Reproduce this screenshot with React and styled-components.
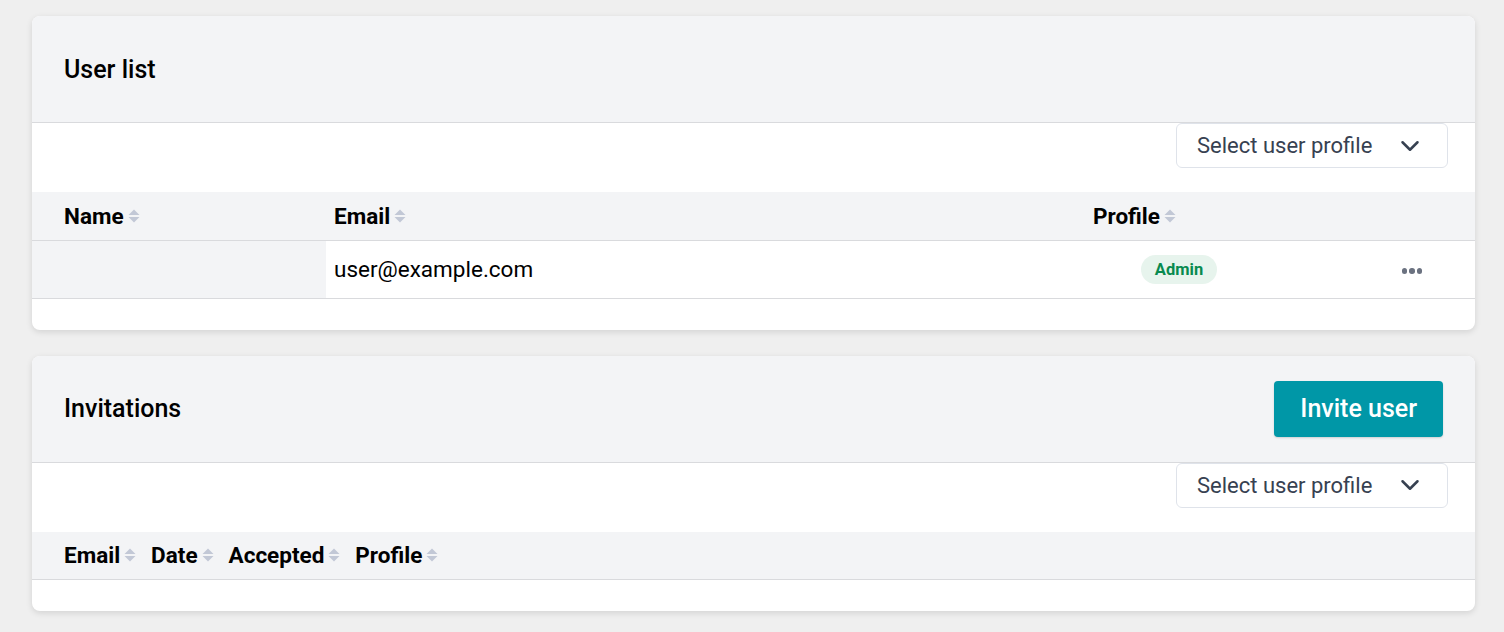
import React from "react";
import styled, { createGlobalStyle } from "styled-components";
import { ChevronDown } from "lucide-react";

const Global = createGlobalStyle`
  html, body { margin: 0; padding: 0; background: #efefef; }
  body { font-family: Roboto, "Noto Sans", Arial, sans-serif; color: #000; }
`;

const Page = styled.div`
  display: flex;
  flex-direction: column;
  gap: 26px;
  padding: 16px 29px 20px 32px;
`;

const Card = styled.section`
  background: #fff;
  border-radius: 8px;
  box-shadow: 0 2px 6px rgba(0, 0, 0, 0.12);
  overflow: hidden;
  padding-bottom: 31px;
`;

const CardHeader = styled.header`
  display: flex;
  align-items: center;
  justify-content: space-between;
  height: 106px;
  padding: 0 32px;
  background: #f3f4f6;
  border-bottom: 1px solid #d9dadd;
`;

const Title = styled.h2`
  margin: 0;
  font-size: 25px;
  font-weight: 500;
  color: #000;
`;

const PrimaryButton = styled.button`
  height: 56px;
  padding: 0 26px;
  border: none;
  border-radius: 4px;
  background: #0097a7;
  color: #fff;
  font-family: inherit;
  font-size: 25px;
  font-weight: 500;
  box-shadow: 0 1px 2px rgba(0, 0, 0, 0.15);
`;

const FilterRow = styled.div`
  display: flex;
  justify-content: flex-end;
  padding: 0 27px 24px 0;
`;

const SelectBox = styled.div`
  display: flex;
  align-items: center;
  justify-content: space-between;
  width: 272px;
  height: 45px;
  box-sizing: border-box;
  padding: 0 22px 0 20px;
  border: 1px solid #dfe3ea;
  border-radius: 6px;
  color: #374151;
  font-size: 22px;
`;

const Table = styled.table`
  border-collapse: collapse;
  table-layout: ${(p) => (p.$fixed ? "fixed" : "auto")};
  width: 100%;
`;

const HeadRow = styled.tr`
  background: #f3f4f6;
  border-bottom: 1px solid #d9dadd;
  height: 48px;
`;

const Th = styled.th`
  text-align: left;
  padding: 0 ${(p) => p.$pr || 7}px 0 ${(p) => p.$pl || 8}px;
  font-size: 22.5px;
  font-weight: 700;
  white-space: nowrap;
  width: ${(p) => (p.$grow ? "100%" : "auto")};
`;

const ThInner = styled.span`
  display: inline-flex;
  align-items: center;
`;

const SortIcon = styled.svg`
  margin-left: 4px;
  width: 12px;
  height: 14px;
`;

const BodyRow = styled.tr`
  height: 58px;
  border-bottom: 1px solid #d9dadd;
`;

const Td = styled.td`
  padding: 0 ${(p) => p.$pr || 8}px 0 ${(p) => p.$pl || 8}px;
  font-size: 22.5px;
  text-align: ${(p) => p.$align || "left"};
  vertical-align: middle;
  background: ${(p) => (p.$muted ? "#f3f4f6" : "transparent")};
`;

const Badge = styled.span`
  display: inline-block;
  padding: 5px 14px;
  border-radius: 15px;
  background: #e7f4ed;
  color: #088a4f;
  font-size: 16.5px;
  font-weight: 700;
  line-height: 19px;
`;

const Dots = styled.span`
  display: inline-flex;
  gap: 2px;
  vertical-align: middle;
`;

const Dot = styled.span`
  width: 5.5px;
  height: 5.5px;
  border-radius: 50%;
  background: #6b7280;
`;

const Sort = () => (
  <SortIcon viewBox="0 0 12 14">
    <path d="M6 0.5 L11.5 6 H0.5 Z" fill="#c2c8d6" />
    <path d="M6 13.5 L11.5 8 H0.5 Z" fill="#c2c8d6" />
  </SortIcon>
);

const Head = ({ children, ...rest }) => (
  <Th {...rest}>
    <ThInner>
      {children}
      <Sort />
    </ThInner>
  </Th>
);

const Select = () => (
  <FilterRow>
    <SelectBox>
      <span>Select user profile</span>
      <ChevronDown size={30} strokeWidth={2} color="#374151" />
    </SelectBox>
  </FilterRow>
);

export default function App() {
  return (
    <>
      <Global />
      <Page>
        <Card>
          <CardHeader>
            <Title>User list</Title>
          </CardHeader>
          <Select />
          <Table $fixed>
            <colgroup>
              <col style={{ width: 294 }} />
              <col style={{ width: 759 }} />
              <col style={{ width: 188 }} />
              <col />
            </colgroup>
            <thead>
              <HeadRow>
                <Head $pl={32}>Name</Head>
                <Head>Email</Head>
                <Head>Profile</Head>
                <Th />
              </HeadRow>
            </thead>
            <tbody>
              <BodyRow>
                <Td $muted $pl={32} />
                <Td>user@example.com</Td>
                <Td $align="center">
                  <Badge>Admin</Badge>
                </Td>
                <Td $align="right" $pr={53}>
                  <Dots>
                    <Dot />
                    <Dot />
                    <Dot />
                  </Dots>
                </Td>
              </BodyRow>
            </tbody>
          </Table>
        </Card>
        <Card>
          <CardHeader>
            <Title>Invitations</Title>
            <PrimaryButton>Invite user</PrimaryButton>
          </CardHeader>
          <Select />
          <Table>
            <thead>
              <HeadRow>
                <Head $pl={32}>Email</Head>
                <Head>Date</Head>
                <Head>Accepted</Head>
                <Head $grow>Profile</Head>
              </HeadRow>
            </thead>
          </Table>
        </Card>
      </Page>
    </>
  );
}
